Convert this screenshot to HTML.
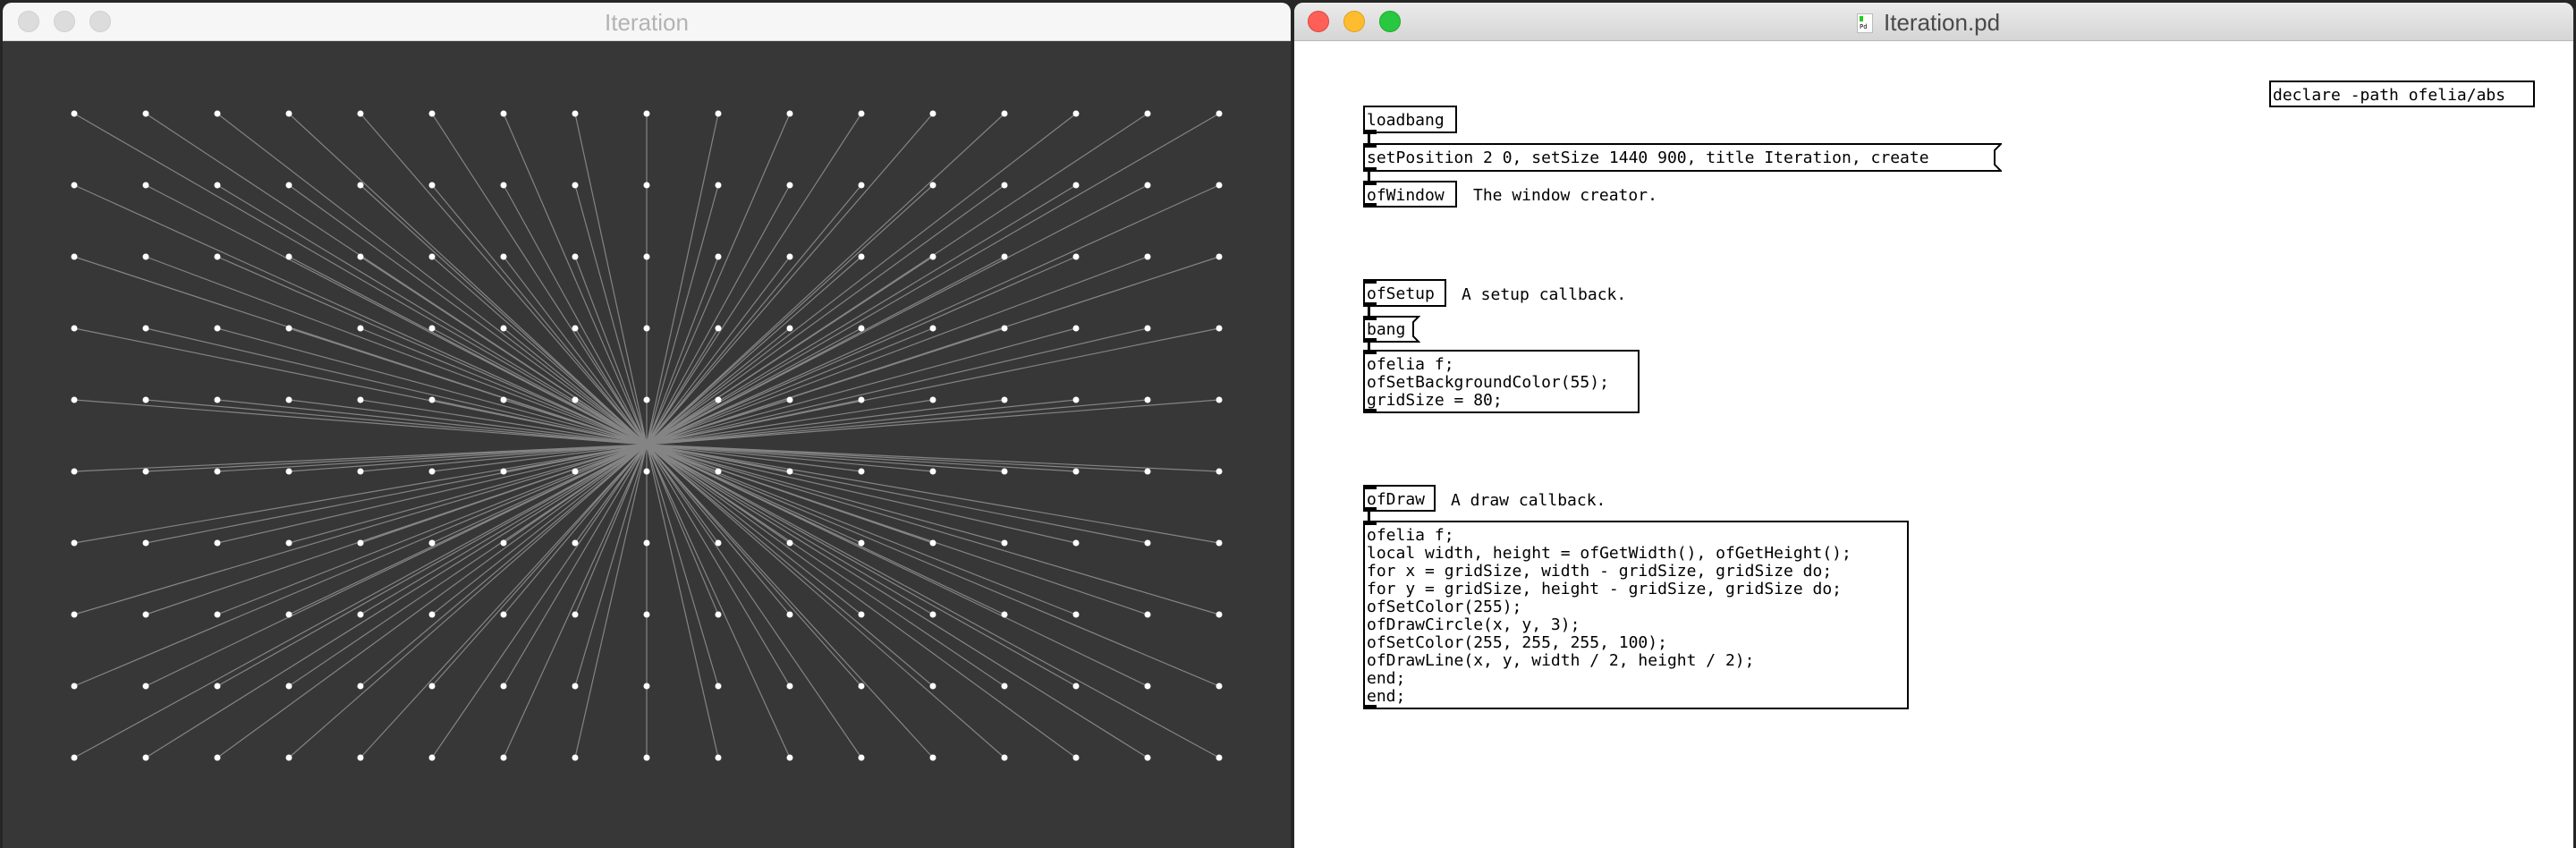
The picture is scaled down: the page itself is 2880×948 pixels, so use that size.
<!DOCTYPE html>
<html><head><meta charset="utf-8"><style>
*{margin:0;padding:0;box-sizing:border-box}
body{width:2880px;height:948px;background:#262626;position:relative;overflow:hidden;font-family:"Liberation Sans",sans-serif}
.win{position:absolute;overflow:hidden}
#lw{left:3px;top:3px;width:1440px;height:945px;background:#373737;border-radius:10px 10px 0 0}
#rw{left:1447px;top:3px;width:1430px;height:945px;background:#fff;border-radius:10px 10px 0 0}
.tb{position:absolute;left:0;top:0;right:0;height:43px;border-bottom:1px solid #c8c8c8}
#lw .tb{background:#f6f6f6;border-bottom-color:#d6d6d6}
#rw .tb{background:linear-gradient(#ebebeb,#d5d5d5);border-bottom-color:#b8b8b8}
.dot{position:absolute;top:9px;width:24px;height:24px;border-radius:50%}
.tt{position:absolute;top:7px;font-size:26px;line-height:30px}
.pd{position:absolute;font-family:"DejaVu Sans Mono","Liberation Mono",monospace;font-size:18px;line-height:20px;color:#000;white-space:pre}
.box{border:2px solid #000;padding:5px 0 0 2px}
.in{position:absolute;width:15px;height:5px;background:#000}
.cn{position:absolute;width:3px;background:#000}
</style></head><body>
<div class="win" id="lw">
<div class="tb">
<div class="dot" style="left:17px;background:#dcdcdc;border:1px solid #d0d0d0"></div>
<div class="dot" style="left:57px;background:#dcdcdc;border:1px solid #d0d0d0"></div>
<div class="dot" style="left:97px;background:#dcdcdc;border:1px solid #d0d0d0"></div>
<div class="tt" style="left:0;right:0;text-align:center;color:#b3b3b3">Iteration</div>
</div>
<svg style="position:absolute;left:0;top:44px" width="1440" height="903" viewBox="0 0 1440 903">
<path stroke="#fff" stroke-opacity="0.39" stroke-width="1.2" fill="none" d="
M80 80L720 450M160 80L720 450M240 80L720 450M320 80L720 450M400 80L720 450M480 80L720 450M560 80L720 450M640 80L720 450M720 80L720 450M800 80L720 450M880 80L720 450M960 80L720 450M1040 80L720 450M1120 80L720 450M1200 80L720 450M1280 80L720 450M1360 80L720 450
M80 160L720 450M160 160L720 450M240 160L720 450M320 160L720 450M400 160L720 450M480 160L720 450M560 160L720 450M640 160L720 450M720 160L720 450M800 160L720 450M880 160L720 450M960 160L720 450M1040 160L720 450M1120 160L720 450M1200 160L720 450M1280 160L720 450M1360 160L720 450
M80 240L720 450M160 240L720 450M240 240L720 450M320 240L720 450M400 240L720 450M480 240L720 450M560 240L720 450M640 240L720 450M720 240L720 450M800 240L720 450M880 240L720 450M960 240L720 450M1040 240L720 450M1120 240L720 450M1200 240L720 450M1280 240L720 450M1360 240L720 450
M80 320L720 450M160 320L720 450M240 320L720 450M320 320L720 450M400 320L720 450M480 320L720 450M560 320L720 450M640 320L720 450M720 320L720 450M800 320L720 450M880 320L720 450M960 320L720 450M1040 320L720 450M1120 320L720 450M1200 320L720 450M1280 320L720 450M1360 320L720 450
M80 400L720 450M160 400L720 450M240 400L720 450M320 400L720 450M400 400L720 450M480 400L720 450M560 400L720 450M640 400L720 450M720 400L720 450M800 400L720 450M880 400L720 450M960 400L720 450M1040 400L720 450M1120 400L720 450M1200 400L720 450M1280 400L720 450M1360 400L720 450
M80 480L720 450M160 480L720 450M240 480L720 450M320 480L720 450M400 480L720 450M480 480L720 450M560 480L720 450M640 480L720 450M720 480L720 450M800 480L720 450M880 480L720 450M960 480L720 450M1040 480L720 450M1120 480L720 450M1200 480L720 450M1280 480L720 450M1360 480L720 450
M80 560L720 450M160 560L720 450M240 560L720 450M320 560L720 450M400 560L720 450M480 560L720 450M560 560L720 450M640 560L720 450M720 560L720 450M800 560L720 450M880 560L720 450M960 560L720 450M1040 560L720 450M1120 560L720 450M1200 560L720 450M1280 560L720 450M1360 560L720 450
M80 640L720 450M160 640L720 450M240 640L720 450M320 640L720 450M400 640L720 450M480 640L720 450M560 640L720 450M640 640L720 450M720 640L720 450M800 640L720 450M880 640L720 450M960 640L720 450M1040 640L720 450M1120 640L720 450M1200 640L720 450M1280 640L720 450M1360 640L720 450
M80 720L720 450M160 720L720 450M240 720L720 450M320 720L720 450M400 720L720 450M480 720L720 450M560 720L720 450M640 720L720 450M720 720L720 450M800 720L720 450M880 720L720 450M960 720L720 450M1040 720L720 450M1120 720L720 450M1200 720L720 450M1280 720L720 450M1360 720L720 450
M80 800L720 450M160 800L720 450M240 800L720 450M320 800L720 450M400 800L720 450M480 800L720 450M560 800L720 450M640 800L720 450M720 800L720 450M800 800L720 450M880 800L720 450M960 800L720 450M1040 800L720 450M1120 800L720 450M1200 800L720 450M1280 800L720 450M1360 800L720 450"/>
<defs><pattern id="p" x="40" y="40" width="80" height="80" patternUnits="userSpaceOnUse"><circle cx="40" cy="40" r="3.5" fill="#fff"/></pattern></defs>
<rect x="70" y="70" width="1300" height="740" fill="url(#p)"/>
</svg>
</div>

<div class="win" id="rw">
<div class="tb">
<div class="dot" style="left:15px;background:#fe5f57;border:1px solid #e2463f"></div>
<div class="dot" style="left:55px;background:#febc2e;border:1px solid #e0a123"></div>
<div class="dot" style="left:95px;background:#28c840;border:1px solid #1aab29"></div>
<div style="position:absolute;left:629px;top:12px;width:18px;height:22px;background:#fff;border:1px solid #bbb"><div style="position:absolute;left:2px;top:2px;width:4px;height:6px;background:#2c2"></div><div style="position:absolute;left:2px;top:11px;font-size:7px;line-height:7px;font-family:'DejaVu Sans Mono',monospace">Pd</div></div>
<div class="tt" style="left:659px;color:#4a4a4a">Iteration.pd</div>
</div>
</div>

<div class="pd box" style="left:2537px;top:90px;width:297px;height:30px">declare -path ofelia/abs</div>

<div class="pd box" style="left:1524px;top:118px;width:105px;height:31px">loadbang</div>
<div class="in" style="left:1524px;top:145px"></div>
<div class="cn" style="left:1529px;top:149px;height:12px"></div>

<svg style="position:absolute;left:1524px;top:160px" width="714" height="32"><path d="M1 1H713L706 8V24L713 31H1Z" fill="#fff" stroke="#000" stroke-width="2"/></svg>
<div class="pd" style="left:1528px;top:167px">setPosition 2 0, setSize 1440 900, title Iteration, create</div>
<div class="in" style="left:1524px;top:160px"></div>
<div class="in" style="left:1524px;top:187px"></div>
<div class="cn" style="left:1529px;top:191px;height:12px"></div>

<div class="pd box" style="left:1524px;top:202px;width:105px;height:30px">ofWindow</div>
<div class="in" style="left:1524px;top:202px"></div>
<div class="in" style="left:1524px;top:227px"></div>
<div class="pd" style="left:1647px;top:209px">The window creator.</div>

<div class="pd box" style="left:1524px;top:312px;width:93px;height:31px">ofSetup</div>
<div class="in" style="left:1524px;top:312px"></div>
<div class="in" style="left:1524px;top:338px"></div>
<div class="cn" style="left:1529px;top:343px;height:11px"></div>
<div class="pd" style="left:1634px;top:320px">A setup callback.</div>

<svg style="position:absolute;left:1524px;top:353px" width="64" height="30"><path d="M1 1H62L56 7V23L62 29H1Z" fill="#fff" stroke="#000" stroke-width="2"/></svg>
<div class="pd" style="left:1528px;top:359px">bang</div>
<div class="in" style="left:1524px;top:353px"></div>
<div class="in" style="left:1524px;top:378px"></div>
<div class="cn" style="left:1529px;top:382px;height:10px"></div>

<div class="pd box" style="left:1524px;top:391px;width:309px;height:71px">ofelia f;
ofSetBackgroundColor(55);
gridSize = 80;</div>
<div class="in" style="left:1524px;top:391px"></div>
<div class="in" style="left:1524px;top:457px"></div>

<div class="pd box" style="left:1524px;top:542px;width:81px;height:30px">ofDraw</div>
<div class="in" style="left:1524px;top:542px"></div>
<div class="in" style="left:1524px;top:567px"></div>
<div class="cn" style="left:1529px;top:571px;height:12px"></div>
<div class="pd" style="left:1622px;top:550px">A draw callback.</div>

<div class="pd box" style="left:1524px;top:582px;width:610px;height:211px">ofelia f;
local width, height = ofGetWidth(), ofGetHeight();
for x = gridSize, width - gridSize, gridSize do;
for y = gridSize, height - gridSize, gridSize do;
ofSetColor(255);
ofDrawCircle(x, y, 3);
ofSetColor(255, 255, 255, 100);
ofDrawLine(x, y, width / 2, height / 2);
end;
end;</div>
<div class="in" style="left:1524px;top:582px"></div>
<div class="in" style="left:1524px;top:788px"></div>
</body></html>
